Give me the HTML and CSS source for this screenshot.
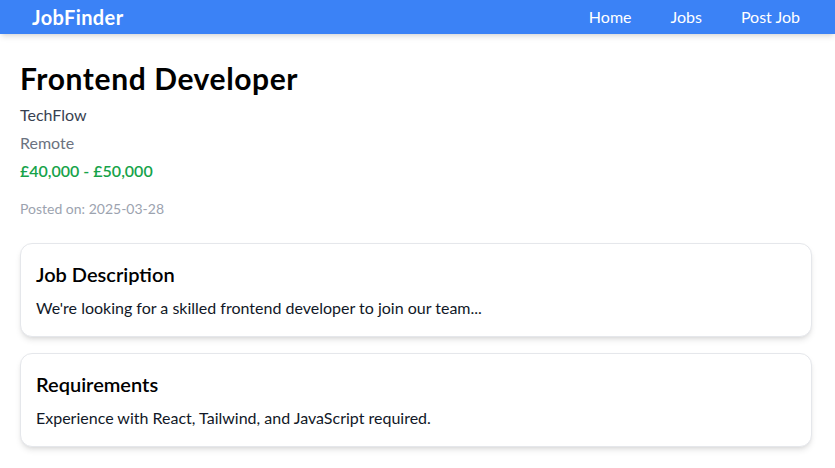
FILE: index.html
```html
<!DOCTYPE html>
<html lang="en">
<head>
<meta charset="utf-8">
<title>JobFinder</title>
<link rel="stylesheet" href="styles.css">
</head>
<body>
<nav class="navbar">
  <a class="brand" href="#">JobFinder</a>
  <div class="nav-links">
    <a href="#">Home</a>
    <a href="#">Jobs</a>
    <a href="#">Post Job</a>
  </div>
</nav>
<main class="job">
  <h1 class="job-title">Frontend Developer</h1>
  <p class="company">TechFlow</p>
  <p class="location">Remote</p>
  <p class="salary">£40,000 - £50,000</p>
  <p class="posted">Posted on: 2025-03-28</p>
  <section class="card">
    <h2>Job Description</h2>
    <p>We're looking for a skilled frontend developer to join our team...</p>
  </section>
  <section class="card">
    <h2>Requirements</h2>
    <p>Experience with React, Tailwind, and JavaScript required.</p>
  </section>
</main>
</body>
</html>
```
FILE: styles.css
```css
* { box-sizing: border-box; }
body {
  margin: 0;
  background: #fff;
  font-family: "Lato", "Noto Sans", sans-serif;
  color: #111;
}
a { text-decoration: none; color: inherit; }
.navbar {
  height: 34px;
  background: #3b82f6;
  color: #fff;
  display: flex;
  align-items: center;
  justify-content: space-between;
  padding: 0 35px 0 32px;
  box-shadow: 0 4px 6px -1px rgba(0,0,0,0.1), 0 2px 4px -2px rgba(0,0,0,0.1);
}
.brand { font-size: 20px; font-weight: 700; line-height: 28px; letter-spacing: 0.4px; }
.nav-links { display: flex; gap: 39px; font-size: 16px; line-height: 24px; }
.job { padding: 26px 23px 20px 20px; }
.job-title { margin: 0 0 7px; font-size: 30px; line-height: 36px; font-weight: 700; color: #000; letter-spacing: 0.6px; }
.job p { margin: 0; }
.company { font-size: 16px; line-height: 24px; color: #374151; }
.location { margin-top: 4px !important; font-size: 16px; line-height: 24px; color: #6b7280; }
.salary { margin-top: 4px !important; font-size: 16px; line-height: 24px; color: #16a34a; font-weight: 600; }
.posted { margin-top: 16px !important; font-size: 14px; line-height: 20px; color: #9ca3af; }
.card {
  margin-top: 24px;
  border: 1px solid #e5e7eb;
  border-radius: 12px;
  padding: 16px 16px 16px 15px;
  background: #fff;
  box-shadow: 0 4px 6px -1px rgba(0,0,0,0.1), 0 2px 4px -2px rgba(0,0,0,0.1);
}
.card + .card { margin-top: 16px; }
.card h2 { margin: 0 0 8px; font-size: 20px; line-height: 28px; font-weight: 600; color: #000; }
.card p { font-size: 16px; line-height: 24px; color: #111827; }
```
